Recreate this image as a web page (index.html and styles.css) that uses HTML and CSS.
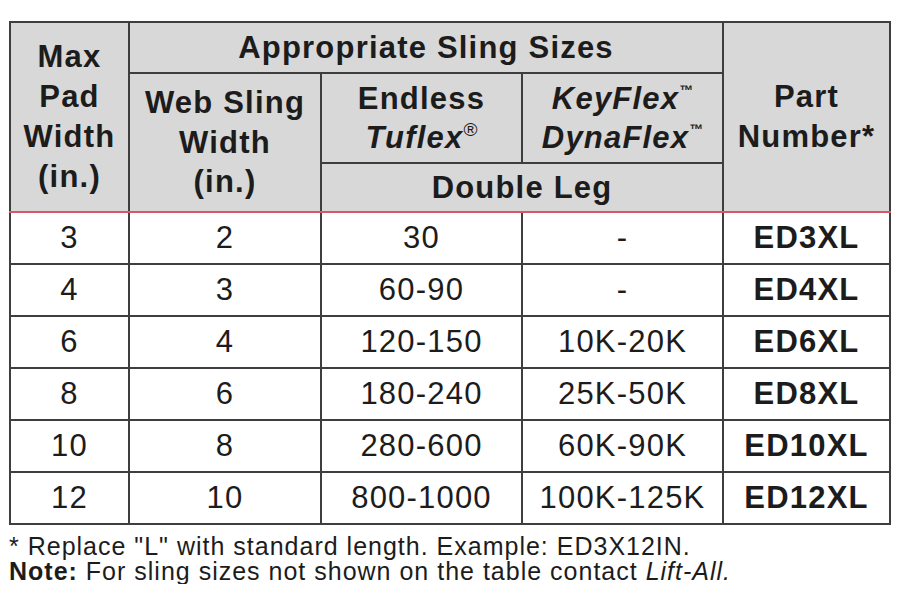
FILE: index.html
```html
<!DOCTYPE html>
<html lang="en">
<head>
<meta charset="utf-8">
<title>Sling Sizes</title>
<link rel="stylesheet" href="styles.css">
</head>
<body>
<div class="page">
  <table class="sizes">
    <colgroup>
      <col class="c1"><col class="c2"><col class="c3"><col class="c4"><col class="c5">
    </colgroup>
    <thead>
      <tr class="h1">
        <th rowspan="3" class="tall">Max<br>Pad<br>Width<br>(in.)</th>
        <th colspan="3">Appropriate Sling Sizes</th>
        <th rowspan="3" class="tall">Part<br>Number*</th>
      </tr>
      <tr class="h2">
        <th rowspan="2" class="tall">Web Sling<br>Width<br>(in.)</th>
        <th>Endless<br><i>Tuflex<sup class="reg">®</sup></i></th>
        <th><i>KeyFlex<sup class="tm">™</sup></i><br><i>DynaFlex<sup class="tm">™</sup></i></th>
      </tr>
      <tr class="h3">
        <th colspan="2" class="tall">Double Leg</th>
      </tr>
    </thead>
    <tbody>
      <tr><td>3</td><td>2</td><td>30</td><td>-</td><td class="part">ED3XL</td></tr>
      <tr><td>4</td><td>3</td><td>60-90</td><td>-</td><td class="part">ED4XL</td></tr>
      <tr><td>6</td><td>4</td><td>120-150</td><td>10K-20K</td><td class="part">ED6XL</td></tr>
      <tr><td>8</td><td>6</td><td>180-240</td><td>25K-50K</td><td class="part">ED8XL</td></tr>
      <tr><td>10</td><td>8</td><td>280-600</td><td>60K-90K</td><td class="part">ED10XL</td></tr>
      <tr><td>12</td><td>10</td><td>800-1000</td><td>100K-125K</td><td class="part">ED12XL</td></tr>
    </tbody>
  </table>
  <div class="notes">
    <p>* Replace "L" with standard length. Example: ED3X12IN.</p>
    <p><b>Note:</b> For sling sizes not shown on the table contact <i>Lift-All.</i></p>
  </div>
</div>
</body>
</html>
```

FILE: styles.css
```css
html, body {
  margin: 0;
  padding: 0;
  background: #ffffff;
}

.page {
  padding: 21px 0 0 9px;
  font-family: "Liberation Sans", Arial, sans-serif;
  color: #1c1c1c;
}

.sizes {
  border-collapse: collapse;
  table-layout: fixed;
  width: 880px;
}

.c1 { width: 119px; }
.c2 { width: 192px; }
.c3 { width: 201px; }
.c4 { width: 201px; }
.c5 { width: 167px; }

.sizes th,
.sizes td {
  border: 2px solid #3e3e3e;
  padding: 0;
  text-align: center;
  vertical-align: middle;
  white-space: nowrap;
  font-size: 31px;
  letter-spacing: 1.2px;
}

.sizes th {
  background: #d8d8d8;
  font-weight: bold;
  line-height: 39.5px;
}

.sizes thead .tall {
  border-bottom: 2px solid #d9566a;
}

.h1 { height: 51px; }
.h2 { height: 90px; }
.h3 { height: 49px; }

.h1 th { line-height: 40px; }

.sizes td {
  height: 50px;
  line-height: 34px;
}

.sizes td.part {
  font-weight: bold;
}

.sizes sup {
  line-height: 0;
  font-style: normal;
  letter-spacing: 0;
}

.sizes sup.reg {
  font-size: 19px;
  font-weight: normal;
  vertical-align: 12px;
}

.sizes sup.tm {
  font-size: 14px;
  font-weight: bold;
  vertical-align: 14px;
}

.notes {
  margin-top: 9px;
  font-size: 25px;
  line-height: 25px;
  letter-spacing: 1px;
}

.notes p {
  margin: 0;
}
```
